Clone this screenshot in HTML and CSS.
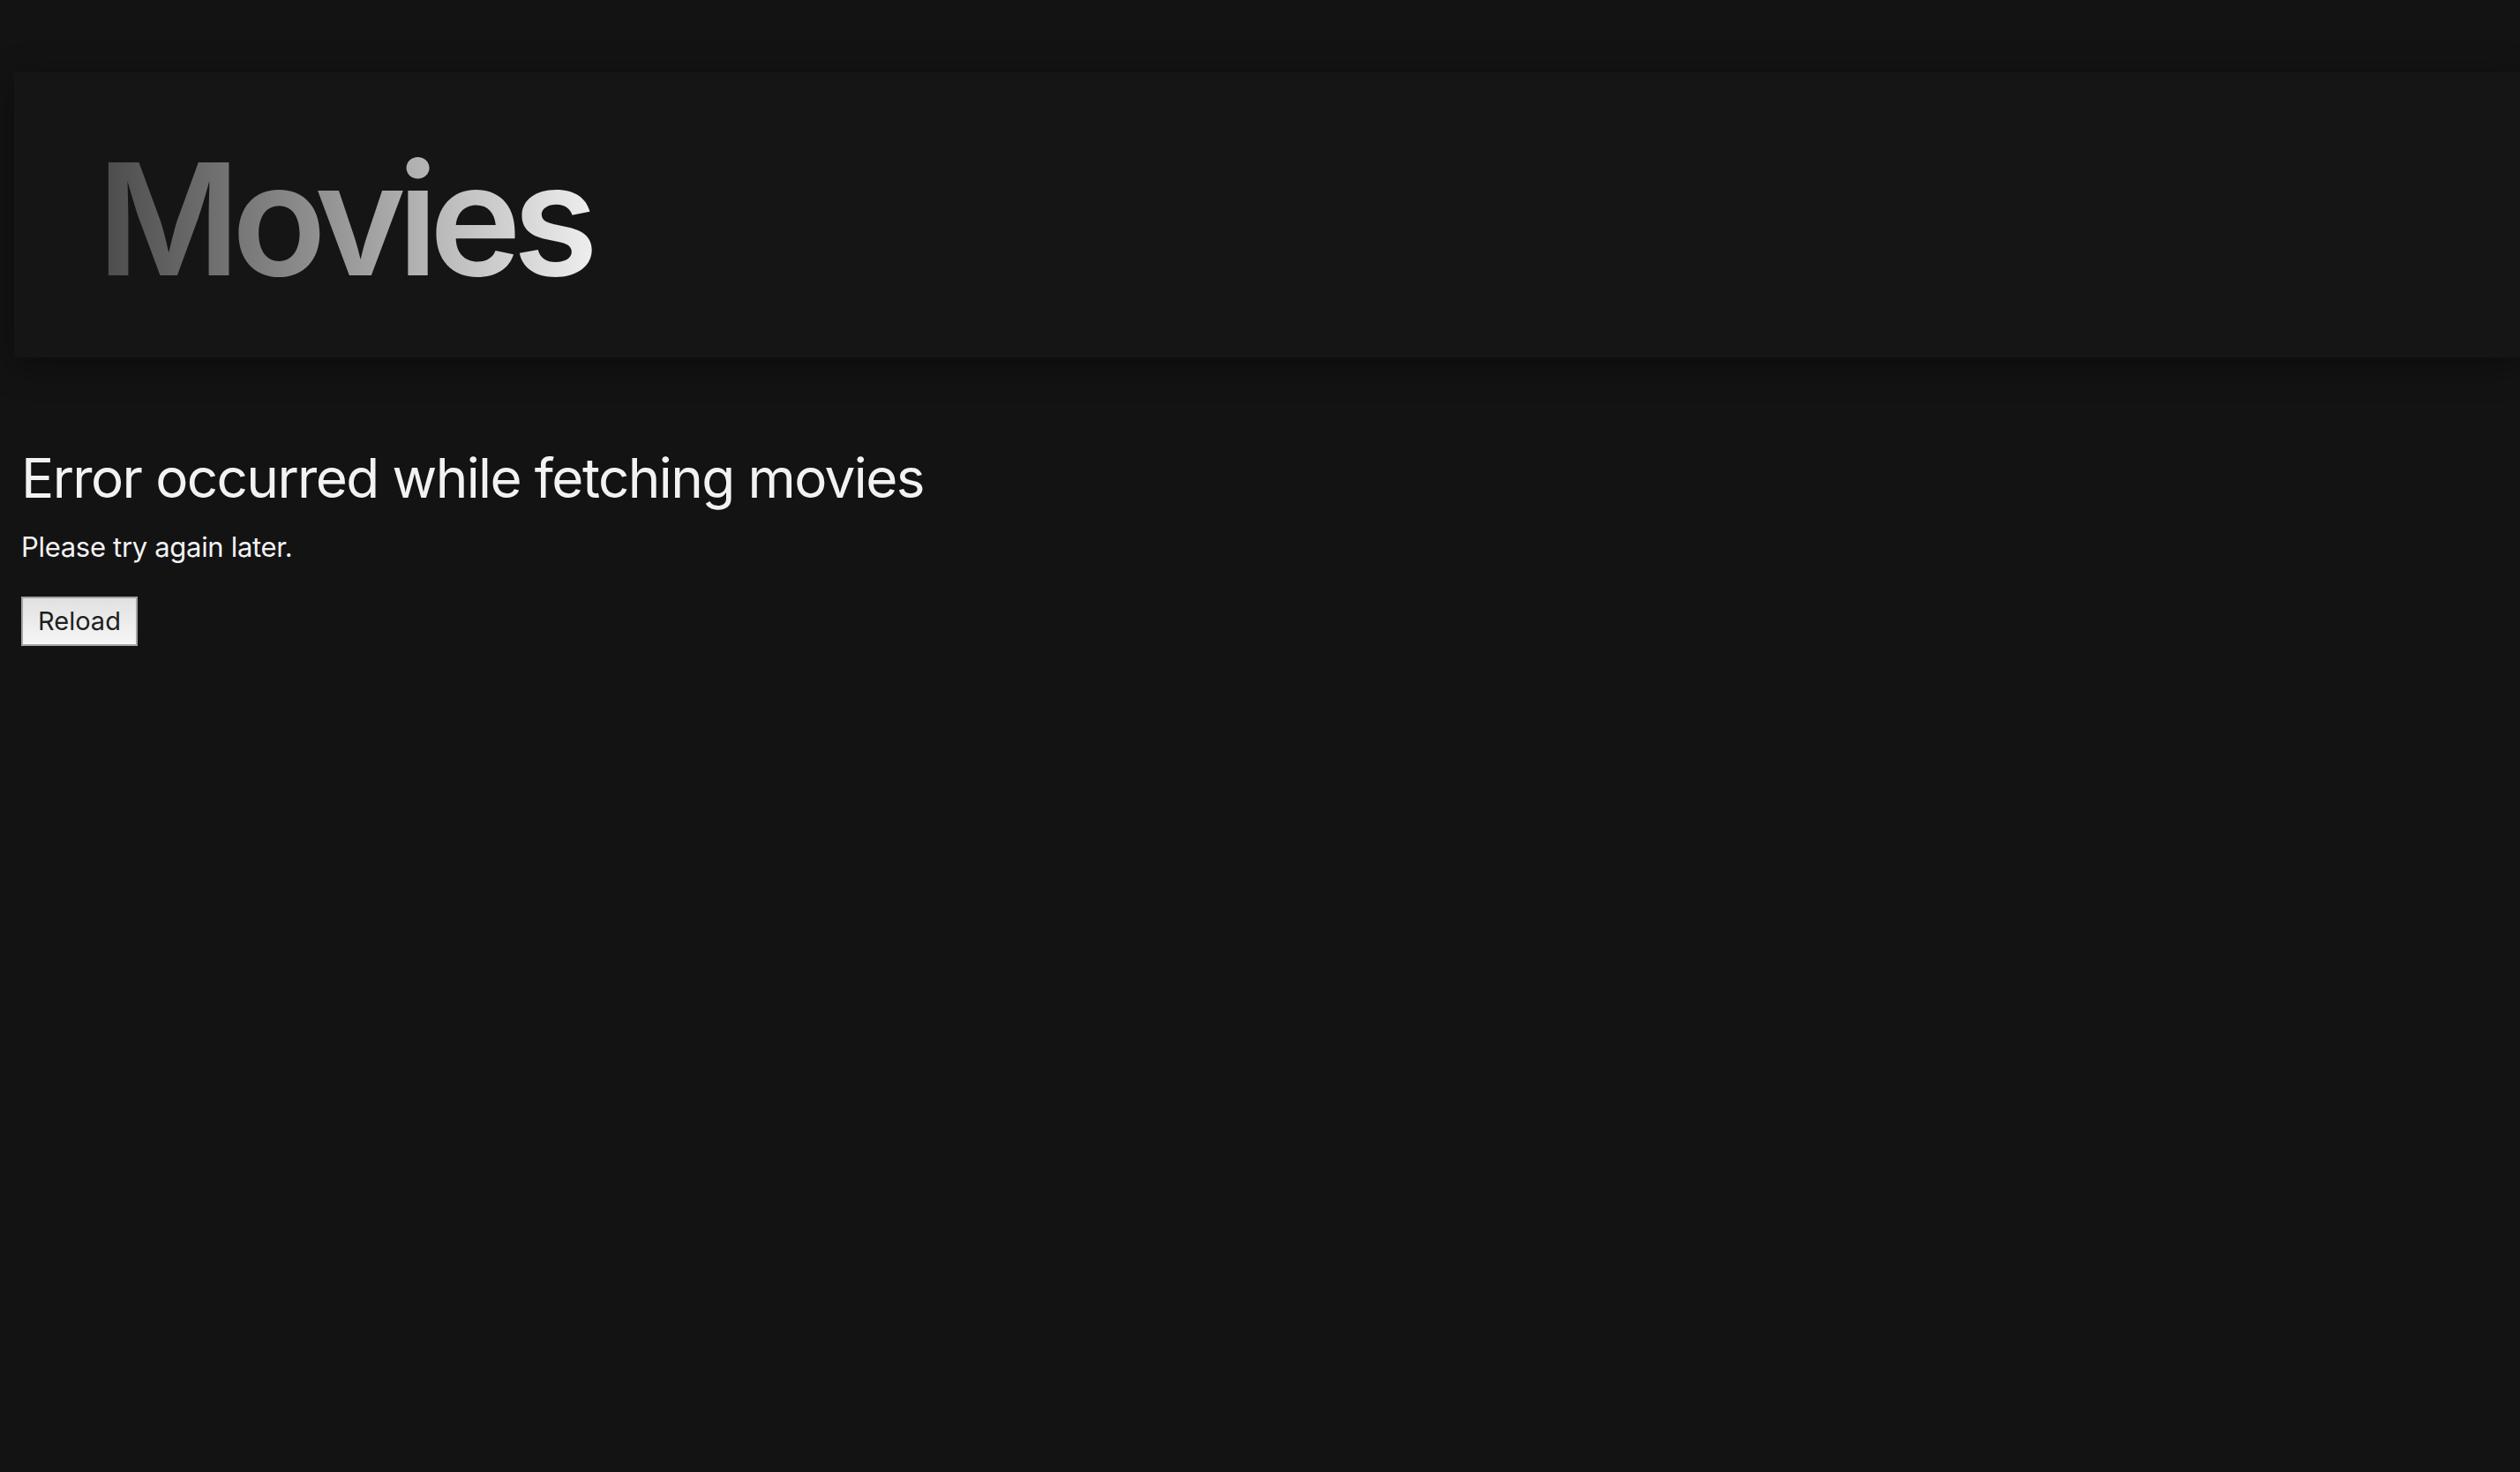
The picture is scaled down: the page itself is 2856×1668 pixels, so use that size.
FILE: index.html
```html
<!DOCTYPE html>
<html lang="en">
<head>
<meta charset="utf-8">
<title>Movies</title>
<link rel="stylesheet" href="styles.css">
</head>
<body>
  <header class="site-header">
    <h1 class="title"><span class="title-text">Movies</span></h1>
  </header>
  <main class="error-box">
    <h2 class="error-title">Error occurred while fetching movies</h2>
    <p class="error-msg">Please try again later.</p>
    <button class="reload-btn" type="button">Reload</button>
  </main>
</body>
</html>
```

FILE: styles.css
```css
html, body {
  margin: 0;
  padding: 0;
  background: #141314;
  font-family: Inter, "Noto Sans", "Liberation Sans", sans-serif;
  color: #f2f2f2;
  overflow: hidden;
}

.site-header {
  margin: 82px 0 0 16px;
  padding: 78px 0 69px 94px;
  background: #161516;
  box-shadow: 0 8px 36px rgba(0, 0, 0, 0.4);
}

.title {
  margin: 0;
  font-size: 176px;
  line-height: 1;
  font-weight: 600;
  letter-spacing: -0.055em;
}

.title-text {
  display: inline-block;
  padding-right: 10px;
  background: linear-gradient(90deg, #4a4a4a 0%, #9a9a9a 50%, #f0f0f0 100%);
  -webkit-background-clip: text;
  background-clip: text;
  color: transparent;
}

.error-box {
  padding: 100px 0 0 24px;
}

.error-title {
  margin: 0;
  font-size: 62px;
  line-height: 1.2;
  font-weight: 400;
  letter-spacing: -0.026em;
  color: #f2f2f2;
}

.error-msg {
  margin: 22px 0 37px;
  font-size: 31px;
  line-height: 1.2;
  letter-spacing: -0.01em;
  color: #f2f2f2;
}

.reload-btn {
  display: block;
  font-family: Inter, "Noto Sans", "Liberation Sans", sans-serif;
  font-size: 29px;
  line-height: 1.2;
  padding: 9px 17px;
  border: 2px solid #a3a3a3;
  border-radius: 0;
  background: linear-gradient(#e1e1e1, #f6f6f6);
  color: #1f1f1f;
}
```
